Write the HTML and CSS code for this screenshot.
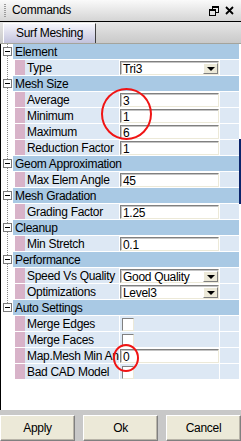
FILE: index.html
```html
<!DOCTYPE html>
<html lang="en">
<head>
  <meta charset="UTF-8" />
  <title>Commands</title>
  <link rel="stylesheet" href="styles.css">
</head>
<body>
  <div class="window">
    <div class="titlebar">
      <span class="grip"></span>
      <span class="title">Commands</span>
      <span class="tb-icons">
        <svg width="10" height="10" viewBox="0 0 10 10">
          <path d="M3 0h7v2h-7z M9 2h1v5h-1z M3 2h1v1h-1z M7 6h2v1h-2z" fill="#000"/>
          <path d="M0 3h7v2h-7z M0 5h1v5h-1z M6 5h1v5h-1z M0 9h7v1h-7z" fill="#000"/>
        </svg>
        <svg width="9" height="9" viewBox="0 0 9 9">
          <path d="M1 1L8 8M8 1L1 8" stroke="#000" stroke-width="1.8" fill="none"/>
        </svg>
      </span>
    </div>

    <div class="tabs">
      <div class="tab">Surf Meshing</div>
    </div>

    <div class="panel">
      <div class="tree">
        <div class="group-head"><span class="gutter"><span class="expander"></span></span><span class="group-title">Element</span></div>
        <div class="prop"><span class="indent"></span><span class="mark"></span><span class="name">Type</span><span class="value select">Tri3<span class="drop"></span></span><span class="fill"></span></div>

        <div class="group-head"><span class="gutter"><span class="expander"></span></span><span class="group-title">Mesh Size</span></div>
        <div class="prop"><span class="indent"></span><span class="mark"></span><span class="name">Average</span><span class="value">3</span><span class="fill"></span></div>
        <div class="prop"><span class="indent"></span><span class="mark"></span><span class="name">Minimum</span><span class="value">1</span><span class="fill"></span></div>
        <div class="prop"><span class="indent"></span><span class="mark"></span><span class="name">Maximum</span><span class="value">6</span><span class="fill"></span></div>
        <div class="prop"><span class="indent"></span><span class="mark"></span><span class="name">Reduction Factor</span><span class="value">1</span><span class="fill"></span></div>

        <div class="group-head"><span class="gutter"><span class="expander"></span></span><span class="group-title">Geom Approximation</span></div>
        <div class="prop"><span class="indent"></span><span class="mark"></span><span class="name">Max Elem Angle</span><span class="value">45</span><span class="fill"></span></div>

        <div class="group-head"><span class="gutter"><span class="expander"></span></span><span class="group-title">Mesh Gradation</span></div>
        <div class="prop"><span class="indent"></span><span class="mark"></span><span class="name">Grading Factor</span><span class="value">1.25</span><span class="fill"></span></div>

        <div class="group-head"><span class="gutter"><span class="expander"></span></span><span class="group-title">Cleanup</span></div>
        <div class="prop"><span class="indent"></span><span class="mark"></span><span class="name">Min Stretch</span><span class="value">0.1</span><span class="fill"></span></div>

        <div class="group-head"><span class="gutter"><span class="expander"></span></span><span class="group-title">Performance</span></div>
        <div class="prop"><span class="indent"></span><span class="mark"></span><span class="name">Speed Vs Quality</span><span class="value select">Good Quality<span class="drop"></span></span><span class="fill"></span></div>
        <div class="prop"><span class="indent"></span><span class="mark"></span><span class="name">Optimizations</span><span class="value select">Level3<span class="drop"></span></span><span class="fill"></span></div>

        <div class="group-head last"><span class="gutter"><span class="expander"></span></span><span class="group-title">Auto Settings</span></div>
        <div class="prop"><span class="indent"></span><span class="mark"></span><span class="name">Merge Edges</span><span class="check-cell"><span class="check"></span></span><span class="fill"></span></div>
        <div class="prop"><span class="indent"></span><span class="mark"></span><span class="name">Merge Faces</span><span class="check-cell"><span class="check"></span></span><span class="fill"></span></div>
        <div class="prop"><span class="indent"></span><span class="mark"></span><span class="name">Map.Mesh Min Angle</span><span class="value">0</span><span class="fill"></span></div>
        <div class="prop"><span class="indent"></span><span class="mark"></span><span class="name">Bad CAD Model</span><span class="check-cell"><span class="check"></span></span><span class="fill"></span></div>
      </div>
    </div>

    <div class="buttons">
      <button class="btn">Apply</button>
      <button class="btn">Ok</button>
      <button class="btn">Cancel</button>
    </div>

    <!-- overlays: edge highlight and the red hand-drawn rings -->
    <div class="edge-mark"></div>
    <div class="ring ring-size"></div>
    <div class="ring ring-angle"></div>
  </div>
</body>
</html>
```

FILE: styles.css
```css
* {
  box-sizing: border-box;
}

body {
  margin: 0;
  width: 241px;
  height: 441px;
  overflow: hidden;
  font-family: "Liberation Sans", Arial, sans-serif;
  font-size: 12px;
  letter-spacing: -0.3px;
  color: #000;
  background: #c8c8c8;
}

.window {
  position: relative;
  width: 241px;
  height: 441px;
  display: flex;
  flex-direction: column;
}

/* title bar */
.titlebar {
  height: 22px;
  flex: none;
  display: flex;
  align-items: center;
  background: linear-gradient(#fafafa, #d4d4d4);
  border-bottom: 1px solid #000;
}

.grip {
  width: 2px;
  height: 14px;
  margin-left: 4px;
  background: repeating-linear-gradient(#9c9c9c 0 1px, transparent 1px 2px);
}

.title {
  margin-left: 6px;
  line-height: 21px;
}

.tb-icons {
  margin-left: auto;
  margin-right: 7px;
  display: flex;
  align-items: center;
  gap: 6px;
}

.tb-icons svg {
  display: block;
}

/* tab strip */
.tabs {
  height: 22px;
  flex: none;
  display: flex;
  align-items: flex-end;
  background: linear-gradient(#e6e6e6, #c9c9c9);
  border-bottom: 1px solid #a4a49c;
}

.tab {
  margin-left: 3px;
  width: 93px;
  height: 20px;
  line-height: 19px;
  text-align: center;
  background: linear-gradient(#f6f6fc, #c2c2dc);
  border-top: 1px solid #fff;
  border-left: 1px solid #fff;
  border-right: 1px solid #404040;
}

/* property tree */
.panel {
  flex: 1;
  background: #fff;
  border-left: 1px solid #000;
  border-right: 2px solid #fff;
}

.tree {
  background-image: repeating-linear-gradient(#8a8a8a 0 1px, transparent 1px 2px);
  background-size: 1px 264px;
  background-position: 6px 0;
  background-repeat: no-repeat;
}

.group-head,
.prop {
  height: 15px;
  margin-bottom: 1px;
  display: flex;
  line-height: 17px;
}

.gutter {
  width: 12px;
  flex: none;
  display: flex;
  align-items: center;
}

.expander {
  position: relative;
  width: 9px;
  height: 9px;
  margin-left: 2px;
  background: #fff;
  border: 1px solid #7a7a7a;
}

.expander::after {
  content: "";
  position: absolute;
  left: 1px;
  top: 3px;
  width: 5px;
  height: 1px;
  background: #000;
}

.group-title {
  flex: 1;
  padding-left: 2px;
  background: #a9c9e4;
  white-space: nowrap;
}

.indent {
  width: 14px;
  flex: none;
}

.mark {
  width: 10px;
  flex: none;
  background: #d8b3c9;
}

.name {
  width: 94px;
  flex: none;
  padding-left: 2px;
  background: #dde8f4;
  white-space: nowrap;
  overflow: hidden;
}

.value {
  width: 99px;
  height: 14px;
  flex: none;
  margin-left: 1px;
  margin-top: 1px;
  padding-left: 2px;
  display: flex;
  align-items: flex-start;
  line-height: 15px;
  background: #fff;
  border-top: 1px solid #808080;
  border-left: 1px solid #808080;
  border-right: 1px solid #ece9d8;
  border-bottom: 1px solid #ece9d8;
  box-shadow: inset 1px 1px 0 #c4c4c4;
}

.drop {
  position: relative;
  width: 15px;
  height: 11px;
  margin-left: auto;
  margin-top: 1px;
  background: #ece9d8;
  border-top: 1px solid #fff;
  border-left: 1px solid #fff;
  border-right: 1px solid #808080;
  border-bottom: 1px solid #808080;
}

.drop::after {
  content: "";
  position: absolute;
  left: 3px;
  top: 3px;
  border-left: 4px solid transparent;
  border-right: 4px solid transparent;
  border-top: 4px solid #000;
}

.check-cell {
  width: 99px;
  flex: none;
  margin-left: 1px;
  padding-left: 2px;
  padding-top: 2px;
  background: #dde8f4;
}

.check {
  display: block;
  width: 12px;
  height: 13px;
  background: #fff;
  border-top: 1px solid #808080;
  border-left: 1px solid #808080;
  border-right: 1px solid #ece9d8;
  border-bottom: 1px solid #ece9d8;
}

.fill {
  flex: 1;
  margin-left: 1px;
  background: #dde8f4;
}

/* bottom buttons */
.buttons {
  height: 31px;
  flex: none;
  display: flex;
  gap: 8px;
  padding-top: 5px;
}

.btn {
  width: 75px;
  height: 26px;
  padding: 0;
  font: inherit;
  letter-spacing: inherit;
  color: #000;
  background: #ece9d8;
  border-top: 1px solid #fff;
  border-left: 1px solid #fff;
  border-right: 1px solid #808080;
  border-bottom: 1px solid #808080;
  box-shadow: inset -1px -1px 0 #b8b4a8;
}

/* overlays */
.edge-mark {
  position: absolute;
  left: 239px;
  top: 139px;
  width: 2px;
  height: 65px;
  background: #0b246b;
}

.ring {
  position: absolute;
  border: 2px solid #f01414;
  border-radius: 50%;
}

.ring-size {
  left: 101px;
  top: 88px;
  width: 51px;
  height: 52px;
}

.ring-angle {
  left: 113px;
  top: 344px;
  width: 26px;
  height: 28px;
}
```
